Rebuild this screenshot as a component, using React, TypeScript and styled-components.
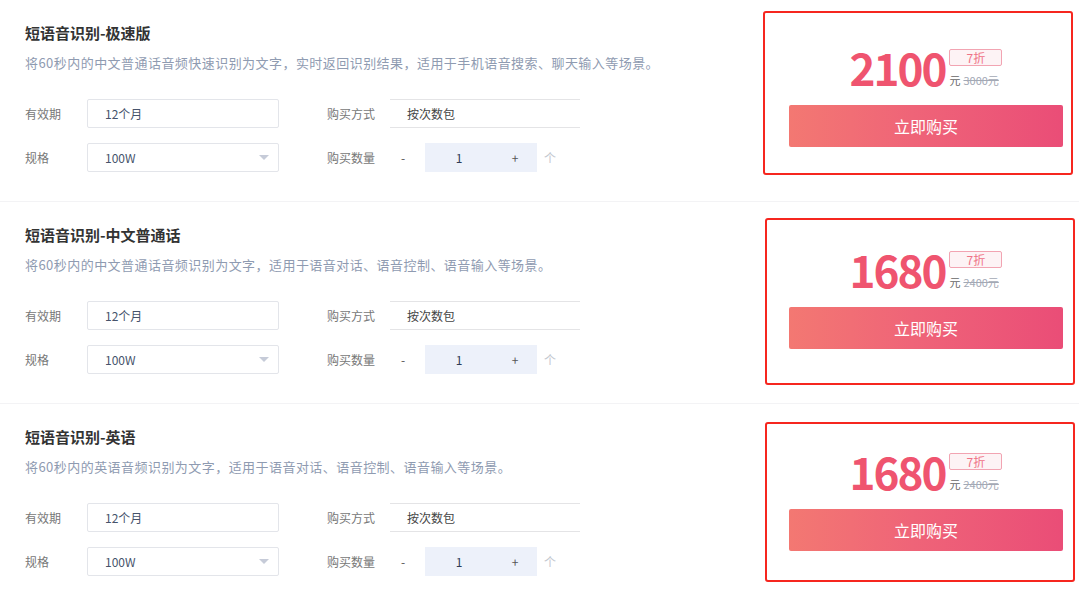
import React from "react"
import styled, { createGlobalStyle } from "styled-components"

const GlobalStyle = createGlobalStyle`
  html, body {
    margin: 0;
    padding: 0;
    background: #fff;
  }
  body {
    font-family: "Noto Sans CJK SC", "Noto Sans", sans-serif;
    color: #333;
  }
`

const Page = styled.div`
  width: 1079px;
  height: 595px;
  overflow: hidden;
  background: #fff;
`

const Row = styled.div`
  display: flex;
  height: 202px;
  border-bottom: 1px solid #f3f3f5;
  box-sizing: border-box;
  &:last-child {
    border-bottom: none;
  }
`

const Info = styled.div`
  flex: 1;
  padding: 23px 0 0 25px;
`

const Title = styled.h2`
  margin: 0;
  font-size: 15px;
  line-height: 20px;
  font-weight: 700;
  color: #333;
`

const Desc = styled.p`
  margin: 10px 0 0;
  font-size: 13px;
  line-height: 20px;
  letter-spacing: 0.45px;
  color: #8f9bb1;
`

const Form = styled.div`
  margin-top: 26px;
  display: flex;
  flex-direction: column;
  gap: 15px;
`

const FormRow = styled.div`
  display: flex;
  align-items: center;
  gap: 48px;
`

const Field = styled.div`
  display: flex;
  align-items: center;
`

const Label = styled.span<{ $w: number }>`
  width: ${p => p.$w}px;
  font-size: 12px;
  color: #777;
`

const InputBox = styled.div`
  width: 192px;
  height: 29px;
  box-sizing: border-box;
  border: 1px solid #e3e5ea;
  border-radius: 2px;
  padding: 0 9px 0 17px;
  display: flex;
  align-items: center;
  justify-content: space-between;
  font-size: 12px;
  color: #46536b;
`

const Caret = styled.span`
  width: 0;
  height: 0;
  border-left: 5px solid transparent;
  border-right: 5px solid transparent;
  border-top: 5px solid #c6cbd8;
`

const LineBox = styled.div`
  width: 190px;
  height: 29px;
  box-sizing: border-box;
  border-top: 1px solid #e4e4e6;
  border-bottom: 1px solid #e4e4e6;
  padding-left: 17px;
  display: flex;
  align-items: center;
  font-size: 12px;
  color: #444;
`

const Qty = styled.div`
  display: flex;
  align-items: center;
  font-size: 12px;
  color: #555;
`

const Minus = styled.span`
  width: 26px;
  margin-right: 9px;
  text-align: center;
`

const QtyBox = styled.div`
  width: 112px;
  height: 29px;
  background: #edf1fa;
  display: flex;
  align-items: center;
`

const QtyValue = styled.span`
  width: 68px;
  text-align: center;
  color: #2f3c58;
`

const Plus = styled.span`
  flex: 1;
  text-align: center;
`

const Unit = styled.span`
  margin-left: 7px;
  color: #c3c7cf;
`

// the red frame is hand drawn, so it sits a little differently in each row;
// padding keeps the price and button at the same place in every row
const PricePanel = styled.div<{ $top: number; $right: number; $h: number }>`
  width: 310px;
  height: ${p => p.$h}px;
  margin: ${p => p.$top}px ${p => p.$right}px 0 0;
  box-sizing: border-box;
  border: 2px solid #f6261f;
  border-radius: 3px;
  padding: ${p => 43 - p.$top}px ${p => 14 - p.$right}px 0
    ${p => 18 + p.$right}px;
  display: flex;
  flex-direction: column;
`

const PriceLine = styled.div`
  display: flex;
  justify-content: center;
  align-items: flex-start;
`

const Amount = styled.span`
  font-size: 44px;
  line-height: 44px;
  font-weight: 700;
  letter-spacing: -2px;
  color: #ef546f;
`

const PriceSide = styled.div`
  margin: 4px 0 0 4px;
  display: flex;
  flex-direction: column;
  align-items: flex-start;
`

const Discount = styled.span`
  width: 53px;
  height: 17px;
  box-sizing: border-box;
  border: 1px solid #f2a4b2;
  border-radius: 2px;
  background: #fdf3f5;
  color: #ef7286;
  font-size: 12px;
  line-height: 15px;
  text-align: center;
`

const Yuan = styled.span`
  margin-top: 7px;
  font-size: 11px;
  line-height: 14px;
  color: #666;
  s {
    margin-left: 3px;
    color: #a3a9b5;
  }
`

const BuyButton = styled.button`
  margin-top: 16px;
  height: 42px;
  width: 100%;
  border: none;
  border-radius: 2px;
  background: linear-gradient(90deg, #f37872 0%, #ef6478 45%, #ea4d77 100%);
  color: #fff;
  font-family: inherit;
  font-size: 16px;
  cursor: pointer;
`

type Product = {
  title: string
  desc: string
  price: string
  original: string
  top: number
  right: number
  h: number
}

const products: Product[] = [
  {
    title: "短语音识别-极速版",
    desc: "将60秒内的中文普通话音频快速识别为文字，实时返回识别结果，适用于手机语音搜索、聊天输入等场景。",
    price: "2100",
    original: "3000元",
    top: 11,
    right: 6,
    h: 164,
  },
  {
    title: "短语音识别-中文普通话",
    desc: "将60秒内的中文普通话音频识别为文字，适用于语音对话、语音控制、语音输入等场景。",
    price: "1680",
    original: "2400元",
    top: 16,
    right: 4,
    h: 167,
  },
  {
    title: "短语音识别-英语",
    desc: "将60秒内的英语音频识别为文字，适用于语音对话、语音控制、语音输入等场景。",
    price: "1680",
    original: "2400元",
    top: 18,
    right: 4,
    h: 160,
  },
]

const ProductRow = ({ item }: { item: Product }) => (
  <Row>
    <Info>
      <Title>{item.title}</Title>
      <Desc>{item.desc}</Desc>
      <Form>
        <FormRow>
          <Field>
            <Label $w={62}>有效期</Label>
            <InputBox>12个月</InputBox>
          </Field>
          <Field>
            <Label $w={63}>购买方式</Label>
            <LineBox>按次数包</LineBox>
          </Field>
        </FormRow>
        <FormRow>
          <Field>
            <Label $w={62}>规格</Label>
            <InputBox>
              100W
              <Caret />
            </InputBox>
          </Field>
          <Field>
            <Label $w={63}>购买数量</Label>
            <Qty>
              <Minus>-</Minus>
              <QtyBox>
                <QtyValue>1</QtyValue>
                <Plus>+</Plus>
              </QtyBox>
              <Unit>个</Unit>
            </Qty>
          </Field>
        </FormRow>
      </Form>
    </Info>
    <PricePanel $top={item.top} $right={item.right} $h={item.h}>
      <PriceLine>
        <Amount>{item.price}</Amount>
        <PriceSide>
          <Discount>7折</Discount>
          <Yuan>
            元<s>{item.original}</s>
          </Yuan>
        </PriceSide>
      </PriceLine>
      <BuyButton>立即购买</BuyButton>
    </PricePanel>
  </Row>
)

const App = () => (
  <Page>
    <GlobalStyle />
    {products.map(p => (
      <ProductRow key={p.title} item={p} />
    ))}
  </Page>
)

export default App
